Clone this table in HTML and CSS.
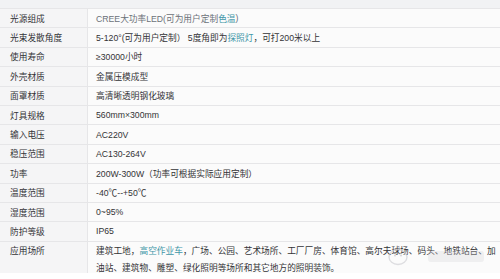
FILE: index.html
```html
<!DOCTYPE html>
<html lang="zh">
<head>
<meta charset="utf-8">
<link rel="stylesheet" href="styles.css">
</head>
<body>
<div class="page">
  <div class="top-strip"></div>
  <div class="spec">
    <div class="k">光源组成</div><div class="v muted">CREE大功率LED(可为用户定制<span class="link">色温</span>)</div>
    <div class="k">光束发散角度</div><div class="v">5-120°(可为用户定制） 5度角即为<span class="link">探照灯</span>，可打200米以上</div>
    <div class="k">使用寿命</div><div class="v">≥30000小时</div>
    <div class="k">外壳材质</div><div class="v">金属压模成型</div>
    <div class="k">面罩材质</div><div class="v">高清晰透明钢化玻璃</div>
    <div class="k">灯具规格</div><div class="v">560mm×300mm</div>
    <div class="k">输入电压</div><div class="v">AC220V</div>
    <div class="k">稳压范围</div><div class="v">AC130-264V</div>
    <div class="k">功率</div><div class="v">200W-300W（功率可根据实际应用定制）</div>
    <div class="k">温度范围</div><div class="v">-40℃--+50℃</div>
    <div class="k">湿度范围</div><div class="v">0~95%</div>
    <div class="k">防护等级</div><div class="v">IP65</div>
    <div class="k tall">应用场所</div><div class="v tall">建筑工地，<span class="link">高空作业车</span>，广场、公园、艺术场所、工厂厂房、体育馆、高尔夫球场、码头、地铁站台、加油站、建筑物、雕塑、绿化照明等场所和其它地方的照明装饰。</div>
  </div>
  <div class="watermark" aria-hidden="true">
    <svg width="100" height="20" viewBox="0 0 100 20">
      <ellipse cx="10" cy="10" rx="9" ry="7.5" fill="none" stroke="#c9c9ce" stroke-width="1.4" opacity="0.6"/>
      <circle cx="7" cy="8.5" r="1.1" fill="#c9c9ce" opacity="0.7"/>
      <circle cx="13" cy="8.5" r="1.1" fill="#c9c9ce" opacity="0.7"/>
      <rect x="40" y="4" width="56" height="11" rx="3" fill="#d4d4d8" opacity="0.3"/>
    </svg>
  </div>
</div>
</body>
</html>
```

FILE: styles.css
```css
html, body {
  margin: 0;
  padding: 0;
  background: #ffffff;
}

.page {
  position: relative;
  width: 500px;
  height: 279px;
  overflow: hidden;
  font-family: "Liberation Sans", "Noto Sans CJK SC", sans-serif;
  font-size: 8.7px;
  color: #333336;
}

.top-strip {
  height: 8px;
  background: #f1f2f4;
}

.spec {
  display: grid;
  grid-template-columns: 88px 1fr;
  grid-auto-rows: 19.4px;
  border-bottom: 1px solid #e6e6e8;
}

.k, .v {
  border-top: 1px solid #e6e6e8;
  display: flex;
  align-items: center;
  white-space: nowrap;
}

.k {
  background: #f5f5f6;
  border-right: 1px solid #e6e6e8;
  padding-left: 10px;
}

.v {
  background: #fbfbfb;
  padding-left: 8px;
}

.muted {
  color: #6b7178;
}

.link {
  color: #3f96a8;
}

.k.tall, .v.tall {
  display: block;
  height: 32.5px;
  padding-top: 1px;
  line-height: 17px;
  box-sizing: border-box;
}

.v.tall {
  white-space: normal;
  padding-right: 0;
}

.watermark {
  position: absolute;
  left: 388px;
  top: 247px;
  pointer-events: none;
}
```
